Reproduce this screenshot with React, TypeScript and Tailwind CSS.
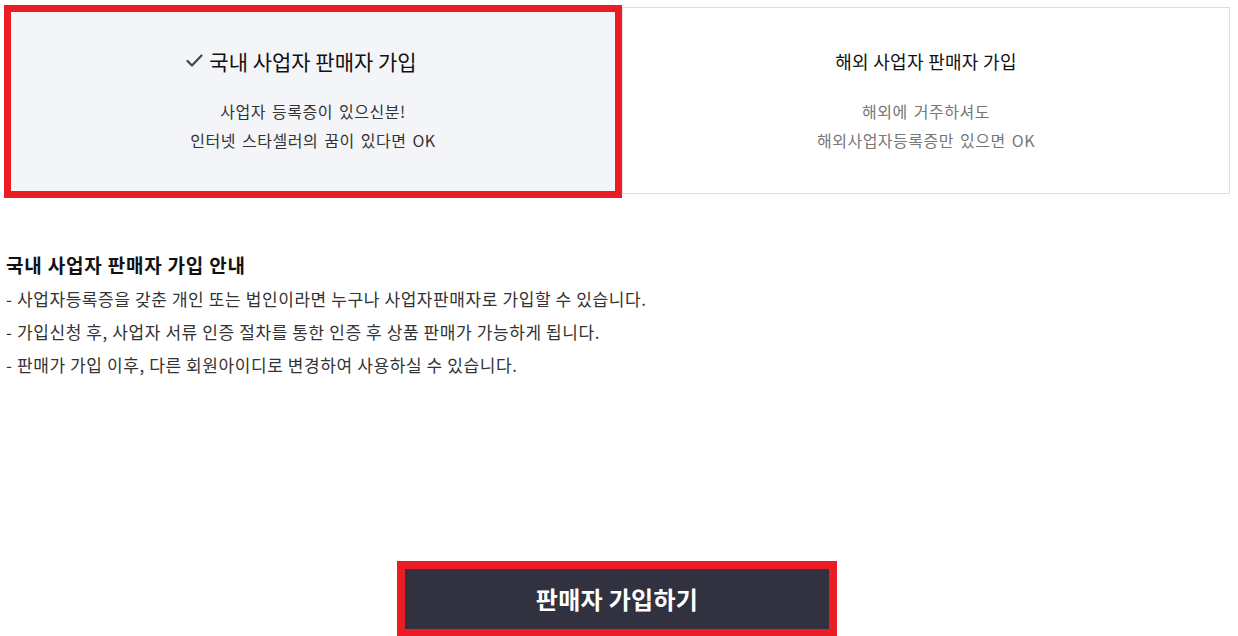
import React from 'react';

const NOTICE = [
  '- 사업자등록증을 갖춘 개인 또는 법인이라면 누구나 사업자판매자로 가입할 수 있습니다.',
  '- 가입신청 후, 사업자 서류 인증 절차를 통한 인증 후 상품 판매가 가능하게 됩니다.',
  '- 판매가 가입 이후, 다른 회원아이디로 변경하여 사용하실 수 있습니다.',
];

function CheckIcon() {
  return (
    <svg width="17" height="14" viewBox="0 0 17 14" className="absolute right-full top-[7px] mr-[6px]">
      <path d="M1.5 7 L6 11.5 L15.5 1.5" fill="none" stroke="#44454f" strokeWidth="2.2" strokeLinecap="round" strokeLinejoin="round" />
    </svg>
  );
}

export default function App() {
  return (
    <div className="w-[1238px] h-[636px] overflow-hidden bg-white font-['Noto_Sans_CJK_KR',sans-serif] text-[#222]">
      {/* seller type cards */}
      <div className="flex items-start pl-[4px] pt-[5px]">
        <div className="w-[618px] h-[193px] border-[7px] border-[#ec1c24] bg-[#f4f5f9] flex flex-col items-center pt-[35px]">
          <div className="relative h-[28px] text-[21px] leading-[28px] text-[#111]">
            <CheckIcon />
            국내 사업자 판매자 가입
          </div>
          <div className="mt-[22px] text-center text-[16px] leading-[29px] text-[#333] tracking-[0.5px] [word-spacing:2px]">
            <p>사업자 등록증이 있으신분!</p>
            <p>인터넷 스타셀러의 꿈이 있다면 OK</p>
          </div>
        </div>
        <div className="mt-[2px] w-[608px] h-[187px] border border-[#dddddd] bg-white flex flex-col items-center pt-[40px]">
          <div className="h-[26px] text-[18px] leading-[26px] text-[#111] tracking-[0.3px]">해외 사업자 판매자 가입</div>
          <div className="mt-[23px] text-center text-[16px] leading-[29px] text-[#777] tracking-[0.5px] [word-spacing:2px]">
            <p>해외에 거주하셔도</p>
            <p>해외사업자등록증만 있으면 OK</p>
          </div>
        </div>
      </div>

      {/* guide */}
      <div className="mt-[54px] pl-[6px]">
        <h3 className="text-[19px] leading-[26px] font-bold text-[#111] tracking-[0.8px]">국내 사업자 판매자 가입 안내</h3>
        <ul className="mt-[4px] text-[17px] leading-[33px] text-[#333] tracking-[0.6px]">
          {NOTICE.map((line) => (
            <li key={line}>{line}</li>
          ))}
        </ul>
      </div>

      {/* submit */}
      <div className="w-[1234px] flex justify-center mt-[180px]">
        <button className="w-[440px] h-[76px] border-[8px] border-[#ec1c24] bg-[#31313f] text-white text-[24px] font-bold tracking-[0.3px]">
          판매자 가입하기
        </button>
      </div>
    </div>
  );
}
